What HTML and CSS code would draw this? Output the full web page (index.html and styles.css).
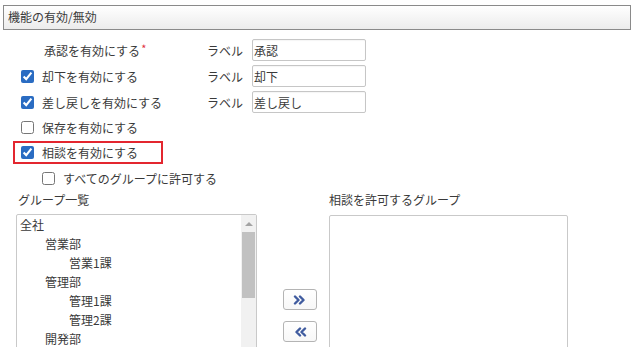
FILE: index.html
```html
<!DOCTYPE html>
<html lang="ja">
<head>
<meta charset="utf-8">
<title>機能の有効/無効</title>
<link rel="stylesheet" href="styles.css">
</head>
<body>
<div class="header">機能の有効/無効</div>
<div class="form">
  <div class="row">
    <span class="opt nocheck">承認を有効にする<span class="req">*</span></span>
    <span class="lbl">ラベル</span>
    <input class="txt" type="text" value="承認">
  </div>
  <div class="row">
    <label class="opt"><input type="checkbox" class="cb" checked>却下を有効にする</label>
    <span class="lbl">ラベル</span>
    <input class="txt" type="text" value="却下">
  </div>
  <div class="row">
    <label class="opt"><input type="checkbox" class="cb" checked>差し戻しを有効にする</label>
    <span class="lbl">ラベル</span>
    <input class="txt" type="text" value="差し戻し">
  </div>
  <div class="row short">
    <label class="opt"><input type="checkbox" class="cb">保存を有効にする</label>
  </div>
  <div class="row mark-row">
    <label class="mark"><input type="checkbox" class="cb" checked>相談を有効にする</label>
  </div>
  <div class="row short sub">
    <label class="opt"><input type="checkbox" class="cb">すべてのグループに許可する</label>
  </div>
</div>
<div class="transfer">
  <div class="col left">
    <div class="cap">グループ一覧</div>
    <div class="listbox">
      <ul class="items">
        <li>全社</li>
        <li class="l1">営業部</li>
        <li class="l2">営業1課</li>
        <li class="l1">管理部</li>
        <li class="l2">管理1課</li>
        <li class="l2">管理2課</li>
        <li class="l1">開発部</li>
      </ul>
      <div class="sbar">
        <div class="sbar-up"></div>
        <div class="sbar-thumb"></div>
      </div>
    </div>
  </div>
  <div class="mid">
    <button class="mv" type="button" aria-label="追加">
      <svg width="14" height="10" viewBox="0 0 14 10"><path d="M2 1.5 L5.5 5 L2 8.5 M7 1.5 L10.5 5 L7 8.5" fill="none" stroke="#3f5b9f" stroke-width="2.4" stroke-linecap="round" stroke-linejoin="round"/></svg>
    </button>
    <button class="mv" type="button" aria-label="削除">
      <svg width="14" height="10" viewBox="0 0 14 10"><path d="M7 1.5 L3.5 5 L7 8.5 M12 1.5 L8.5 5 L12 8.5" fill="none" stroke="#3f5b9f" stroke-width="2.4" stroke-linecap="round" stroke-linejoin="round"/></svg>
    </button>
  </div>
  <div class="col right">
    <div class="cap">相談を許可するグループ</div>
    <div class="listbox empty"></div>
  </div>
</div>
</body>
</html>
```
FILE: styles.css
```css
html, body {
  margin: 0;
  padding: 0;
  overflow: hidden;
  background: #fff;
}
body {
  font-family: "Noto Sans CJK JP", "Noto Sans", sans-serif;
  font-size: 12px;
  color: #3a3a3a;
  width: 632px;
  height: 347px;
}
.header {
  box-sizing: border-box;
  height: 25px;
  margin: 5px 1px 0 3px;
  border: 1px solid #8a8a8a;
  background: linear-gradient(#ffffff, #ececec);
  padding-left: 4px;
  line-height: 22px;
}
.form {
  margin-top: 9px;
}
.row {
  display: flex;
  align-items: center;
  height: 22px;
  margin-bottom: 4px;
  padding-left: 21px;
}
.row.short {
  height: 21px;
}
.opt {
  width: 186px;
  display: flex;
  align-items: center;
  gap: 8px;
  white-space: nowrap;
}
.opt.nocheck {
  box-sizing: border-box;
  padding-left: 23px;
  gap: 0;
}
.req {
  color: #e0303a;
  font-size: 11px;
  align-self: flex-start;
  margin-top: -2px;
  margin-left: 1px;
}
.cb {
  width: 13px;
  height: 13px;
  margin: 0;
  accent-color: #2a6cc2;
  flex: none;
}
.lbl {
  width: 45px;
  white-space: nowrap;
}
.txt {
  box-sizing: border-box;
  width: 114px;
  height: 22px;
  margin: 0;
  border: 1px solid #c6c6c6;
  border-radius: 2px;
  padding: 0 1px;
  font-family: inherit;
  font-size: 12px;
  color: #3a3a3a;
  box-shadow: inset 0 1px 1px rgba(0,0,0,0.04);
  outline: none;
}
.row.short:nth-child(4) {
  margin-bottom: 3px;
}
.mark-row {
  height: 23px;
  padding-left: 13px;
}
.mark {
  box-sizing: border-box;
  width: 150px;
  height: 23px;
  border: 2px solid #e3262f;
  padding-left: 6px;
  display: flex;
  align-items: center;
  gap: 8px;
  white-space: nowrap;
}
.row.sub {
  padding-left: 42px;
}
.transfer {
  display: flex;
  align-items: flex-start;
  margin-top: -2px;
}
.col.left {
  margin-left: 16px;
  width: 241px;
}
.col.right {
  width: 239px;
}
.cap {
  height: 17px;
  line-height: 17px;
  margin-bottom: 6px;
  padding-left: 2px;
  white-space: nowrap;
}
.col.right .cap {
  padding-left: 0;
  margin-bottom: 7px;
}
.listbox {
  box-sizing: border-box;
  height: 140px;
  border: 1px solid #c9c9c9;
  border-radius: 2px;
  display: flex;
  background: #fff;
}
.items {
  flex: 1;
  list-style: none;
  margin: 0;
  padding: 0 0 0 3px;
}
.items li {
  line-height: 19px;
  height: 19px;
  white-space: nowrap;
}
.items li.l1 { padding-left: 25px; }
.items li.l2 { padding-left: 49px; }
.sbar {
  width: 15px;
  background: #f1f1f1;
  display: flex;
  flex-direction: column;
  align-items: center;
}
.sbar-up {
  width: 0;
  height: 0;
  margin-top: 7px;
  margin-bottom: 6px;
  border-left: 4px solid transparent;
  border-right: 4px solid transparent;
  border-bottom: 4px solid #a3a3a3;
}
.sbar-thumb {
  width: 13px;
  height: 66px;
  background: #c1c1c1;
}
.mid {
  width: 34px;
  padding: 98px 12px 0 26px;
  display: flex;
  flex-direction: column;
  gap: 11px;
}
.mv {
  box-sizing: border-box;
  width: 34px;
  height: 21px;
  margin: 0;
  padding: 0;
  border: 1px solid #b4b4b4;
  border-radius: 3px;
  background: linear-gradient(#ffffff, #f7f7f7);
  display: flex;
  align-items: center;
  justify-content: center;
}
.mv svg {
  display: block;
}
```
